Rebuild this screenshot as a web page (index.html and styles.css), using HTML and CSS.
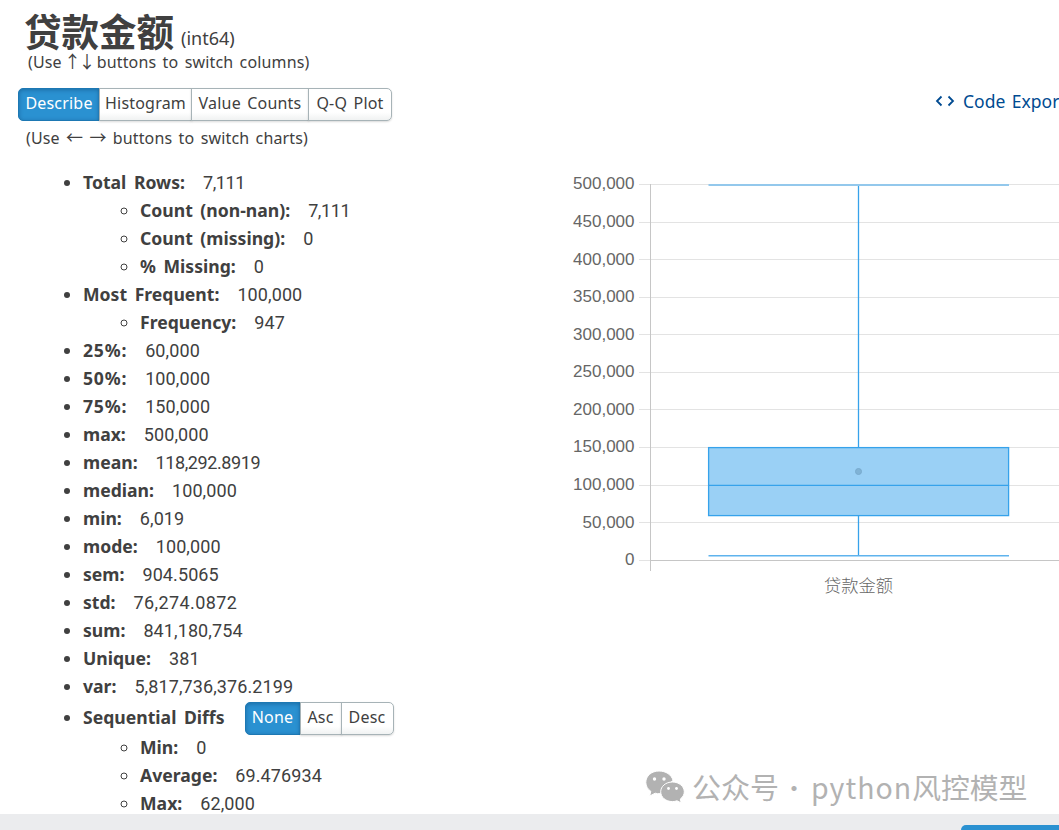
FILE: index.html
```
<!doctype html>
<html lang="en">
  <head>
    <meta charset="UTF-8" />
    <title>Describe</title>
    <link rel="stylesheet" href="styles.css">
  </head>
  <body>
    <main class="page">
      <header class="heading">
        <h1>贷款金额</h1>
        <span class="dtype">(int64)</span>
      </header>
      <div class="hint hint-columns">(Use <span class="arrow vertical">↑</span> <span class="arrow vertical">↓</span> buttons to switch columns)</div>

      <div class="toolbar">
        <div class="btn-group tabs">
          <button class="active tab-describe">Describe</button>
          <button class="tab-histogram">Histogram</button>
          <button class="tab-counts">Value Counts</button>
          <button class="tab-qq">Q-Q Plot</button>
        </div>
        <a class="code-export">
          <svg width="20" height="14" viewBox="0 0 20 14">
            <path d="M6.5 2.500 L2 7 L6.500 11.500 M13.500 2.500 L18 7 L13.500 11.500" />
          </svg>
          <span>Code Export</span>
        </a>
      </div>
      <div class="hint hint-charts">(Use <span class="arrow">←</span> <span class="arrow">→</span> buttons to switch charts)</div>

      <div class="content">
        <ul class="stats">
          <li><b>Total Rows:</b><span class="tight">7,111</span>
            <ul>
              <li><b>Count (non-nan):</b><span class="tight">7,111</span></li>
              <li><b>Count (missing):</b><span>0</span></li>
              <li><b>% Missing:</b><span>0</span></li>
            </ul>
          </li>
          <li><b>Most Frequent:</b><span>100,000</span>
            <ul>
              <li><b>Frequency:</b><span>947</span></li>
            </ul>
          </li>
          <li><b class="percent">25%:</b><span>60,000</span></li>
          <li><b class="percent">50%:</b><span>100,000</span></li>
          <li><b class="percent">75%:</b><span>150,000</span></li>
          <li><b>max:</b><span>500,000</span></li>
          <li><b>mean:</b><span class="tight">118,292.8919</span></li>
          <li><b>median:</b><span>100,000</span></li>
          <li><b>min:</b><span>6,019</span></li>
          <li><b>mode:</b><span>100,000</span></li>
          <li><b>sem:</b><span>904.5065</span></li>
          <li><b>std:</b><span class="wide">76,274.0872</span></li>
          <li><b>sum:</b><span>841,180,754</span></li>
          <li><b>Unique:</b><span>381</span></li>
          <li><b>var:</b><span>5,817,736,376.2199</span></li>
          <li>
            <div class="diffs">
              <b>Sequential Diffs</b>
              <div class="btn-group">
                <button class="active sort-none">None</button>
                <button class="sort-asc">Asc</button>
                <button class="sort-desc">Desc</button>
              </div>
            </div>
            <ul>
              <li><b>Min:</b><span>0</span></li>
              <li><b>Average:</b><span>69.476934</span></li>
              <li><b>Max:</b><span>62,000</span></li>
            </ul>
          </li>
        </ul>

        <svg class="chart" width="499" height="440" viewBox="0 0 499 440">
          <g class="grid">
            <path d="M79 16.5H499M79 54.5H499M79 91.5H499M79 129.5H499M79 166.5H499M79 204.5H499M79 241.5H499M79 279.5H499M79 317.5H499M79 354.5H499M79 392.5H90" />
          </g>
          <path class="axis" d="M90.5 16V403M91 392.5H499" />
          <g class="ticks">
            <text x="74.5" y="21">500,000</text>
            <text x="74.5" y="59">450,000</text>
            <text x="74.5" y="97">400,000</text>
            <text x="74.5" y="134">350,000</text>
            <text x="74.5" y="172">300,000</text>
            <text x="74.5" y="209">250,000</text>
            <text x="74.5" y="247">200,000</text>
            <text x="74.5" y="284">150,000</text>
            <text x="74.5" y="322">100,000</text>
            <text x="74.5" y="360">50,000</text>
            <text x="74.5" y="397">0</text>
          </g>
          <rect class="box" x="148.6" y="279.6" width="300" height="68" />
          <path class="whisker" d="M148.5 317.4H448.5M298.5 17V279M298.5 348V387" />
          <path class="cap cap-max" d="M148.5 17H449" />
          <path class="cap" d="M148.5 387.800H449" />
          <circle class="mean" cx="298.5" cy="303.5" r="3" />
          <text class="category" x="298.5" y="423.5">贷款金额</text>
        </svg>
      </div>
    </main>

    <footer class="footer"><div class="footer-button"></div></footer>

    <div class="watermark">
      <svg width="40" height="33" viewBox="0 0 40 33">
        <path d="M14 1C6.5 1 .8 6 .8 12.4c0 3.6 1.9 6.8 5 8.9L4.7 26l5.5-2.8c1.500.4 3 .6 4.900.5L28 10.200C26.400 4.700 20.800 1 14 1Z" />
        <path d="M27.500 12C20.700 12 15.700 16.400 15.700 21.800s5 9.800 11.800 9.800c1.600 0 3.100-.3 4.500-.8l4.200 2.100-.9-3.900c2.500-1.800 4-4.400 4-7.200C39.300 16.400 34 12 27.500 12Z" />
        <g class="eyes">
          <circle cx="9.500" cy="9" r="1.700" /><circle cx="19" cy="9" r="1.700" />
          <circle cx="23.500" cy="18.500" r="1.400" /><circle cx="31.500" cy="18.500" r="1.400" />
        </g>
      </svg>
      <span class="wm-account">公众号</span>
      <span class="wm-dot">·</span>
      <span class="wm-latin">python</span><span class="wm-name">风控模型</span>
    </div>
  </body>
</html>
```

FILE: styles.css
```
body {
  position: relative;
  display: flex;
  flex-direction: column;
  width: 1059px;
  height: 830px;
  margin: 0;
  overflow: hidden;
  background-color: #fff;
  color: #404040;
  font-family: "Noto Sans", "Noto Sans CJK SC", sans-serif;
  font-size: 18px;
}

.page {
  height: 814px;
  overflow: hidden;
}

.heading {
  display: flex;
  height: 51px;
  padding-left: 24px;
}

h1 {
  margin: 0;
  font-family: "Noto Sans CJK SC", sans-serif;
  font-size: 37.5px;
  line-height: 60px;
}

.dtype {
  margin-left: 7px;
  font-size: 18px;
  line-height: 76px;
}

.hint {
  height: 24px;
  font-size: 16px;
  line-height: 22px;
  letter-spacing: 0.15px;
  word-spacing: 2px;
  white-space: nowrap;
}

.hint-columns {
  padding-left: 28px;
}

.hint-charts {
  margin-top: 5px;
  padding-left: 26px;
  line-height: 24px;
}

.arrow {
  display: inline-block;
  width: 17px;
  font-family: "Noto Sans CJK SC", sans-serif;
  font-size: 17px;
  line-height: 20px;
}

.vertical {
  width: 8px;
  text-indent: -4px;
}

.toolbar {
  display: flex;
  justify-content: space-between;
  height: 33px;
  margin-top: 13px;
  padding-left: 18px;
}

.btn-group {
  display: flex;
  height: 33px;
}

button {
  box-sizing: border-box;
  height: 33px;
  margin: 0 0 0 -1px;
  padding: 0 0 3px;
  border: 1px solid #a7b3b7;
  background: linear-gradient(#fff 75%, #f0f2f2);
  box-shadow: 0 1px 2px rgba(0, 0, 0, 0.15);
  color: #404040;
  font-family: "Noto Sans", sans-serif;
  font-size: 16px;
  letter-spacing: 0.2px;
  word-spacing: 2px;
  white-space: nowrap;
}

button:first-child {
  margin-left: 0;
  border-radius: 5px 0 0 5px;
}

button:last-child {
  border-radius: 0 5px 5px 0;
}

button.active {
  border-color: #1d78b3;
  background: #2a91d1;
  box-shadow: inset 0 1px 4px rgba(0, 40, 80, 0.35);
  color: #fff;
}

.tab-describe {
  width: 82px;
}

.tab-histogram {
  width: 93px;
}

.tab-counts {
  width: 118px;
}

.tab-qq {
  width: 84px;
}

.code-export {
  display: flex;
  align-items: center;
  gap: 8px;
  width: 124px;
  height: 25px;
  color: #004b91;
  font-size: 17.5px;
  word-spacing: 2px;
  white-space: nowrap;
}

.code-export svg {
  flex: none;
  fill: none;
  stroke: currentColor;
  stroke-width: 1.8;
}

.content {
  display: flex;
  justify-content: space-between;
  margin-top: 18px;
}

.stats {
  width: 400px;
  margin: 0;
  padding-left: 83px;
  line-height: 28px;
  white-space: nowrap;
}

.stats ul {
  margin: 0;
  padding-left: 57px;
}

.stats b {
  font-size: 17.6px;
  line-height: 20px;
  word-spacing: 3px;
}

.stats .percent {
  letter-spacing: 0.8px;
}

.stats span {
  margin-left: 18px;
  font-family: Roboto, sans-serif;
  line-height: 20px;
  letter-spacing: 0.1px;
}

.stats .tight {
  letter-spacing: -0.4px;
}

.stats .wide {
  letter-spacing: 0.4px;
}

.diffs {
  display: flex;
  align-items: center;
  gap: 20px;
  height: 33px;
}

.diffs .btn-group {
  position: relative;
  top: 2px;
}

.sort-none {
  width: 56px;
}

.sort-asc {
  width: 42px;
}

.sort-desc {
  width: 53px;
}

.chart {
  flex: none;
}

.grid {
  fill: none;
  stroke: #e3e3e3;
}

.axis {
  fill: none;
  stroke: #c6c6c6;
}

.ticks,
.category {
  fill: #666;
  font-family: "Liberation Sans", sans-serif;
  font-size: 17px;
  text-anchor: end;
}

.category {
  font-family: "Noto Sans CJK SC", sans-serif;
  font-size: 17.3px;
  font-weight: 300;
  text-anchor: middle;
}

.box {
  fill: #9ad0f5;
  stroke: #36a2eb;
  stroke-width: 1.3;
}

.whisker {
  fill: none;
  stroke: #36a2eb;
  stroke-width: 1.3;
}

.cap {
  stroke: #5fb3ed;
  stroke-width: 1.6;
}

.cap-max {
  stroke: #93c8ec;
  stroke-width: 2;
}

.mean {
  fill: #80b3d6;
  stroke: #78aacd;
}

.footer {
  display: flex;
  justify-content: flex-end;
  height: 16px;
  background-color: #ebecee;
}

.footer-button {
  width: 98px;
  height: 5px;
  margin-top: 11px;
  border-radius: 5px 0 0;
  background-color: #2a91d1;
}

.watermark {
  position: absolute;
  top: 767px;
  left: 645px;
  display: flex;
  align-items: center;
  height: 38px;
  color: #b2b2b2;
  font-family: "Noto Sans CJK SC", sans-serif;
  font-size: 29px;
  white-space: nowrap;
}

.watermark svg {
  fill: #b2b2b2;
  stroke: #fff;
  stroke-width: 1;
}

.watermark .eyes {
  fill: #fff;
  stroke: none;
}

.wm-account {
  margin-left: 7px;
}

.wm-dot {
  width: 30px;
  font-size: 24px;
  text-align: center;
}

.wm-latin {
  margin-left: 2px;
  font-size: 28.5px;
  letter-spacing: 1px;
}

.wm-name {
  font-size: 28.8px;
}
```
